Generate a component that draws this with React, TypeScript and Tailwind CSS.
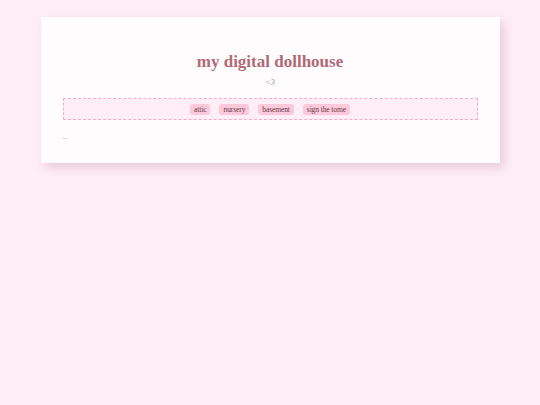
export default function App() {
  const rooms = ["attic", "nursery", "basement", "sign the tome"];

  return (
    <div className="min-h-screen bg-[#ffeef6] pt-[17px] font-['Liberation_Serif',serif]">
      <div className="mx-auto w-[459px] bg-[#fffcfd] px-[22px] pt-[35px] pb-[21px] shadow-[4px_5px_10px_rgba(190,140,160,0.35)]">
        <h1 className="text-center text-[17px] leading-[20px] font-bold text-[#b06a78]">
          my digital dollhouse
        </h1>
        <p className="mt-[6px] text-center text-[8px] leading-[10px] italic text-[#8a8a8a]">&lt;3</p>
        <nav className="mt-[10px] flex h-[22px] items-center justify-center gap-[9px] border border-dashed border-[#f0b0c4] bg-[#ffeef5]">
          {rooms.map((r) => (
            <a
              key={r}
              className="rounded-[3px] bg-[#fbc9da] px-[4px] text-[7.5px] leading-[11px] tracking-[-0.1px] text-[#6e3a48]"
            >
              {r}
            </a>
          ))}
        </nav>
        <p className="mt-[13px] text-[7px] leading-[9px] text-[#999]">...</p>
      </div>
    </div>
  );
}
